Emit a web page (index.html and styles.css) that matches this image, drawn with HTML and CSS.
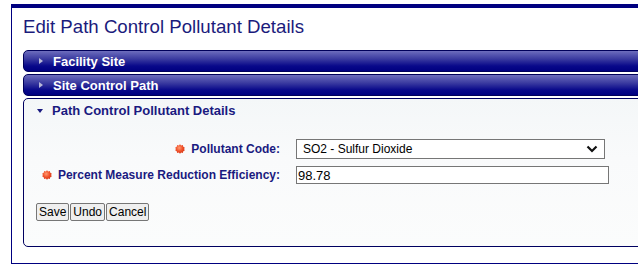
FILE: index.html
```html
<!DOCTYPE html>
<html>
<head>
<meta charset="utf-8">
<link rel="stylesheet" href="styles.css">
</head>
<body>
<div class="page">
  <h1 class="title">Edit Path Control Pollutant Details</h1>
  <div class="accordion">
    <div class="acc-head closed"><span class="tri-right"></span>Facility Site</div>
    <div class="acc-head closed"><span class="tri-right"></span>Site Control Path</div>
    <div class="acc-panel">
      <div class="acc-head open"><span class="tri-down"></span>Path Control Pollutant Details</div>
      <div class="acc-body">
        <div class="form-grid">
          <label class="lbl"><svg class="req" viewBox="0 0 10 10" width="10" height="10"><defs><radialGradient id="g1" cx="0.42" cy="0.38" r="0.6"><stop offset="0" stop-color="#ff9a70"/><stop offset="0.6" stop-color="#f0502a"/><stop offset="1" stop-color="#d83a18"/></radialGradient></defs><polygon points="5,0.3 6.2,1.4 7.8,1.1 8.3,2.7 9.7,3.5 9.2,5 9.7,6.5 8.3,7.3 7.8,8.9 6.2,8.6 5,9.7 3.8,8.6 2.2,8.9 1.7,7.3 0.3,6.5 0.8,5 0.3,3.5 1.7,2.7 2.2,1.1 3.8,1.4" fill="url(#g1)"/></svg>Pollutant Code:</label>
          <div class="field"><div class="select"><span>SO2 - Sulfur Dioxide</span><svg class="chev" viewBox="0 0 12 8" width="12" height="8"><path d="M1.5 1.5 L6 6 L10.5 1.5" fill="none" stroke="#111" stroke-width="2.2"/></svg></div></div>
          <label class="lbl"><svg class="req" viewBox="0 0 10 10" width="10" height="10"><defs><radialGradient id="g2" cx="0.42" cy="0.38" r="0.6"><stop offset="0" stop-color="#ff9a70"/><stop offset="0.6" stop-color="#f0502a"/><stop offset="1" stop-color="#d83a18"/></radialGradient></defs><polygon points="5,0.3 6.2,1.4 7.8,1.1 8.3,2.7 9.7,3.5 9.2,5 9.7,6.5 8.3,7.3 7.8,8.9 6.2,8.6 5,9.7 3.8,8.6 2.2,8.9 1.7,7.3 0.3,6.5 0.8,5 0.3,3.5 1.7,2.7 2.2,1.1 3.8,1.4" fill="url(#g2)"/></svg>Percent Measure Reduction Efficiency:</label>
          <div class="field"><input class="text" type="text" value="98.78"></div>
        </div>
        <div class="buttons">
          <button class="btn">Save</button><button class="btn">Undo</button><button class="btn">Cancel</button>
        </div>
      </div>
    </div>
  </div>
</div>
</body>
</html>
```
FILE: styles.css
```css
html, body {
  margin: 0;
  padding: 0;
  background: #ffffff;
  overflow: hidden;
}
body {
  font-family: "Liberation Sans", Arial, sans-serif;
}
.page {
  margin: 4px 0 0 11px;
  width: 700px;
  border-top: 4px solid #000080;
  border-left: 1px solid #000080;
  border-bottom: 1px solid #000080;
  padding: 7px 0 16px 11px;
  box-sizing: border-box;
}
.title {
  margin: 0 0 11px 0;
  font-size: 18.67px;
  font-weight: normal;
  line-height: 24px;
  color: #1b1b7c;
}
.accordion {
  display: flex;
  flex-direction: column;
  gap: 2px;
}
.acc-head {
  box-sizing: border-box;
  display: flex;
  align-items: center;
  font-size: 13px;
  font-weight: bold;
  padding-left: 15px;
}
.acc-head.closed {
  height: 22px;
  color: #ffffff;
  border: 1px solid #00005a;
  border-radius: 5px 0 0 5px;
  background: linear-gradient(to bottom, #6d6dbd 0%, #3a3aa0 40%, #08088a 75%, #000080 100%);
}
.tri-right {
  width: 0;
  height: 0;
  border-top: 3.5px solid transparent;
  border-bottom: 3.5px solid transparent;
  border-left: 4px solid #b8b8d8;
  margin-right: 10px;
}
.acc-panel {
  border: 1px solid #000060;
  border-radius: 5px 0 0 5px;
  background: linear-gradient(to bottom, #f4f7f8 0%, #f9fafb 40%, #fbfcfc 100%);
}
.acc-head.open {
  color: #1a1a80;
  height: 23px;
  padding-left: 13px;
}
.tri-down {
  width: 0;
  height: 0;
  border-left: 3.5px solid transparent;
  border-right: 3.5px solid transparent;
  border-top: 4px solid #1a1a80;
  margin-right: 9px;
}
.acc-body {
  padding: 17px 0 25px 0;
}
.form-grid {
  display: grid;
  grid-template-columns: 256px auto;
  column-gap: 16px;
  row-gap: 7px;
  align-items: center;
}
.lbl {
  display: flex;
  justify-content: flex-end;
  align-items: center;
  gap: 6px;
  font-size: 12px;
  font-weight: bold;
  color: #1a1a80;
}
.req {
  display: block;
}
.field {
  display: flex;
}
.select {
  width: 309px;
  height: 20px;
  box-sizing: border-box;
  border: 1px solid #767676;
  background: #ffffff;
  display: flex;
  align-items: center;
  justify-content: space-between;
  padding: 0 6px 0 6px;
  font-size: 12px;
  color: #000;
}
.chev {
  display: block;
}
.text {
  width: 313px;
  height: 18px;
  box-sizing: border-box;
  border: 1px solid #767676;
  padding: 0 1px;
  font-family: "Liberation Sans", Arial, sans-serif;
  font-size: 13px;
  color: #000;
  background: #fff;
  margin: 0;
  outline: none;
}
.buttons {
  display: flex;
  gap: 1px;
  margin: 19px 0 0 12px;
}
.btn {
  font-family: "Liberation Sans", Arial, sans-serif;
  font-size: 12px;
  height: 18px;
  padding: 0 2px;
  margin: 0;
  border: 1px solid #767676;
  border-radius: 2px;
  background: #efefef;
  color: #000;
  line-height: 14px;
}
```
